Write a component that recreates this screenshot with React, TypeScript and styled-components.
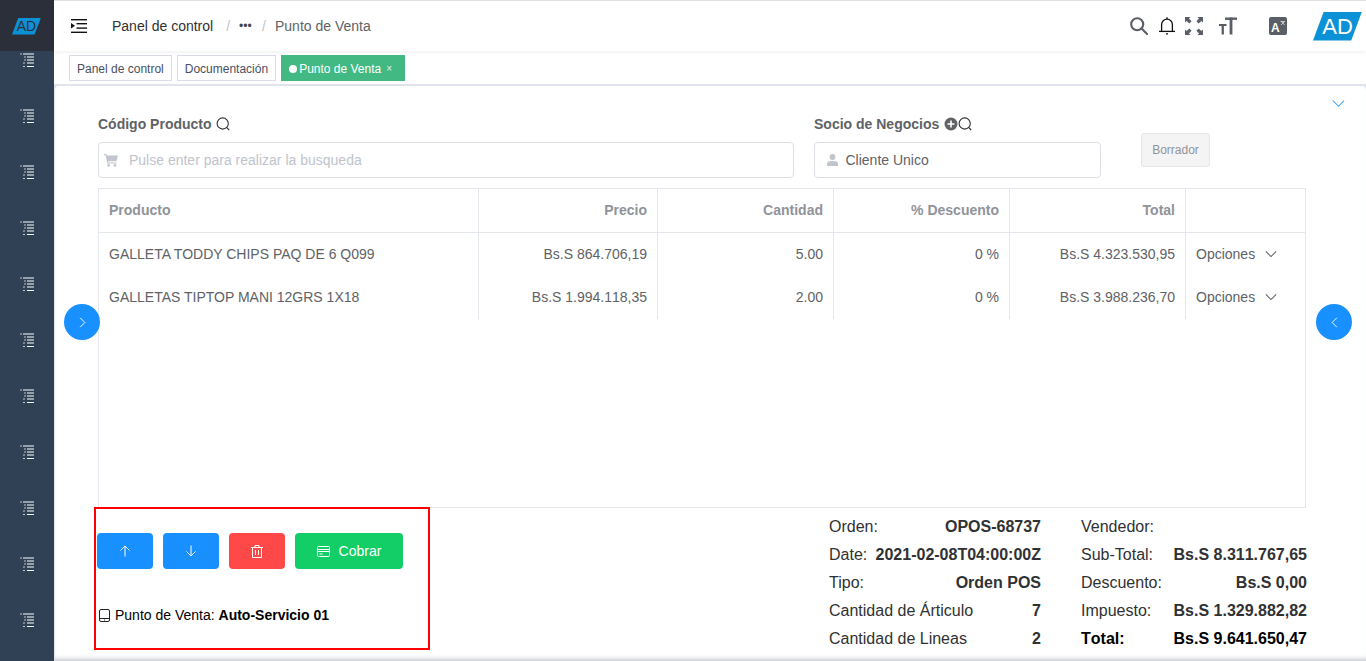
import React from 'react';
import styled, { createGlobalStyle } from 'styled-components';

const GlobalStyle = createGlobalStyle`
  html, body {
    margin: 0;
    height: 661px;
    overflow: hidden;
    background: #fff;
    font-family: "Liberation Sans", Arial, sans-serif;
    font-size: 14px;
    color: #606266;
  }
  * { box-sizing: border-box; }
`;

const rows = [
  { name: 'GALLETA TODDY CHIPS PAQ DE 6 Q099', price: 'Bs.S 864.706,19', qty: '5.00', disc: '0 %', total: 'Bs.S 4.323.530,95' },
  { name: 'GALLETAS TIPTOP MANI 12GRS 1X18', price: 'Bs.S 1.994.118,35', qty: '2.00', disc: '0 %', total: 'Bs.S 3.988.236,70' },
];

const leftSummary = [
  ['Orden:', 'OPOS-68737'],
  ['Date:', '2021-02-08T04:00:00Z'],
  ['Tipo:', 'Orden POS'],
  ['Cantidad de Árticulo', '7'],
  ['Cantidad de Lineas', '2'],
];

const rightSummary = [
  ['Vendedor:', ''],
  ['Sub-Total:', 'Bs.S 8.311.767,65'],
  ['Descuento:', 'Bs.S 0,00'],
  ['Impuesto:', 'Bs.S 1.329.882,82'],
];

const MenuIcon = () => (
  <svg width="14" height="15" viewBox="0 0 14 15" fill="#fff">
    <rect x="0" y="0.5" width="2" height="1" opacity="0.7" />
    <rect x="3" y="0.5" width="11" height="1" />
    <rect x="4" y="3.5" width="2" height="1" opacity="0.7" />
    <rect x="7" y="3.5" width="7" height="1" />
    <rect x="4" y="6.5" width="2" height="1" opacity="0.7" />
    <rect x="7" y="6.5" width="7" height="1" />
    <rect x="3" y="9.5" width="2" height="1" opacity="0.7" />
    <rect x="7" y="9.5" width="7" height="1" />
    <rect x="3" y="13" width="2" height="1" opacity="0.7" />
    <rect x="7" y="13" width="7" height="1" />
  </svg>
);

const Hamburger = () => (
  <svg width="16" height="14" viewBox="0 0 16 14" fill="#111">
    <rect x="0" y="0" width="16" height="1.4" />
    <rect x="5.5" y="4" width="10.5" height="1.4" />
    <rect x="5.5" y="8.4" width="10.5" height="1.4" />
    <rect x="0" y="12.6" width="16" height="1.4" />
    <path d="M0 4l4 2.8L0 9.6z" />
  </svg>
);

const SearchRing = () => (
  <svg width="14" height="14" viewBox="0 0 14 14" fill="none" stroke="#303133" strokeWidth="1.1">
    <circle cx="6.7" cy="6.500" r="5.600" />
    <path d="M10.800 10.600l2.400 2.400" />
  </svg>
);

const BigSearch = () => (
  <svg width="18" height="18" viewBox="0 0 18 18" fill="none" stroke="#5a5e66" strokeWidth="2.1">
    <circle cx="7.2" cy="7.2" r="6" />
    <path d="M11.6 11.6l5.4 5.4" strokeLinecap="round" />
  </svg>
);

const Bell = () => (
  <svg width="16" height="18" viewBox="0 0 16 18" fill="none" stroke="#111" strokeWidth="1.3">
    <path d="M2.6 14V7.500a5.400 5.400 0 0 1 10.800 0V14" />
    <path d="M8 .3v1.800" />
    <path d="M0 14.400h16" />
    <path d="M7 16.800h2" />
  </svg>
);

const Fullscreen = () => (
  <svg width="18" height="18" viewBox="0 0 18 18" fill="#5a5e66">
    <path d="M0 0h5.500L3.900 1.600 6.600 4.300 4.300 6.600 1.600 3.900 0 5.500z" />
    <path d="M18 0v5.500l-1.600-1.600-2.700 2.700-2.300-2.300 2.700-2.700L12.500 0z" />
    <path d="M0 18v-5.500l1.600 1.600 2.700-2.700 2.300 2.300-2.700 2.700L5.500 18z" />
    <path d="M18 18h-5.500l1.600-1.600-2.700-2.700 2.300-2.300 2.700 2.700 1.600-1.600z" />
  </svg>
);

const TextSize = () => (
  <svg width="18" height="18" viewBox="0 0 18 18" fill="#5a5e66">
    <rect x="6" y="0.5" width="12" height="2.4" />
    <rect x="10.6" y="0.5" width="2.8" height="17" />
    <rect x="0" y="7" width="7.5" height="2" />
    <rect x="2.6" y="7" width="2.3" height="10.5" />
  </svg>
);

const Translate = () => (
  <svg width="18" height="18" viewBox="0 0 18 18">
    <rect width="18" height="18" rx="2" fill="#5a5e66" />
    <text x="2" y="15" fontFamily="Liberation Sans" fontSize="12" fontWeight="700" fill="#fff">A</text>
    <path d="M11.5 4.5h4.5M12 8l3.5-3.5M12.5 4.5L15.5 8" stroke="#d5d6d9" strokeWidth="0.9" fill="none" />
  </svg>
);

const Cart = () => (
  <svg width="14" height="14" viewBox="0 0 14 14" fill="#c0c4cc">
    <path d="M0 1h2.4l.5 1.6H14l-1.6 5.6H4.2l.3 1.2h8v1.2H3.4L1.6 2.2H0z" />
    <circle cx="4.6" cy="12.4" r="1.3" />
    <circle cx="11" cy="12.4" r="1.3" />
  </svg>
);

const Person = () => (
  <svg width="11" height="12" viewBox="0 0 11 12" fill="#c0c4cc">
    <circle cx="5.5" cy="3" r="2.9" />
    <path d="M0 12V9.6C0 7.8 2 7 5.5 7S11 7.8 11 9.6V12z" />
  </svg>
);

const PlusCircle = () => (
  <svg width="14" height="14" viewBox="0 0 14 14">
    <circle cx="7" cy="7" r="6.5" fill="#606266" />
    <path d="M7 3.5v7M3.5 7h7" stroke="#fff" strokeWidth="1.6" />
  </svg>
);

const Chevron = ({ dir, color, size }: { dir: 'up' | 'down' | 'left' | 'right'; color: string; size: number }) => {
  const d = { down: 'M1 4l6 6 6-6', up: 'M1 10l6-6 6 6', left: 'M10 1L4 7l6 6', right: 'M4 1l6 6-6 6' }[dir];
  return (
    <svg width={size} height={size} viewBox="0 0 14 14" fill="none" stroke={color} strokeWidth="1.2">
      <path d={d} />
    </svg>
  );
};

const ArrowUp = () => (
  <svg width="12" height="12" viewBox="0 0 12 12" fill="none" stroke="#fff" strokeWidth="1">
    <path d="M6 11.500V1M1.500 5.500L6 1l4.500 4.500" />
  </svg>
);

const ArrowDown = () => (
  <svg width="12" height="12" viewBox="0 0 12 12" fill="none" stroke="#fff" strokeWidth="1">
    <path d="M6 .5V11M1.500 6.500L6 11l4.500-4.500" />
  </svg>
);

const Trash = () => (
  <svg width="12" height="13" viewBox="0 0 12 13" fill="none" stroke="#fff" strokeWidth="1">
    <path d="M0 2.500h12M4 2.500V.5h4v2M1.500 2.500v10h9v-10M4.500 5v5M7.500 5v5" />
  </svg>
);

const BankCard = () => (
  <svg width="13" height="11" viewBox="0 0 13 11" fill="none" stroke="#fff" strokeWidth="1">
    <rect x="0.5" y="0.500" width="12" height="10" rx="1" />
    <path d="M.5 3.500h12M.5 5.500h12M2.500 8h3" />
  </svg>
);

const Tablet = () => (
  <svg width="11" height="13" viewBox="0 0 11 13" fill="none" stroke="#222" strokeWidth="1">
    <rect x="0.5" y="0.5" width="10" height="12" rx="1.500" />
    <path d="M.5 9.500h10M5 11h1" />
  </svg>
);

export default function App() {
  return (
    <>
      <GlobalStyle />
      <Layout>
        <Sidebar>
          <SideLogo>
            <Parallelogram $small>AD</Parallelogram>
          </SideLogo>
          <SideMenu>
            {Array.from({ length: 11 }, (_, i) => (
              <SideItem key={i}>
                <MenuIcon />
              </SideItem>
            ))}
          </SideMenu>
        </Sidebar>
        <Main>
          <Navbar>
            <HamburgerSlot>
              <Hamburger />
            </HamburgerSlot>
            <Crumb $strong>Panel de control</Crumb>
            <CrumbSep>/</CrumbSep>
            <CrumbDots>•••</CrumbDots>
            <CrumbSep>/</CrumbSep>
            <Crumb>Punto de Venta</Crumb>
            <NavRight>
              <NavIcon $gap={11}>
                <BigSearch />
              </NavIcon>
              <NavIcon $gap={10}>
                <Bell />
              </NavIcon>
              <NavIcon $gap={16}>
                <Fullscreen />
              </NavIcon>
              <NavIcon $gap={32}>
                <TextSize />
              </NavIcon>
              <NavIcon $gap={26}>
                <Translate />
              </NavIcon>
              <Parallelogram>AD</Parallelogram>
            </NavRight>
          </Navbar>
          <TagsBar>
            <Tag>Panel de control</Tag>
            <Tag>Documentación</Tag>
            <Tag $active>
              <TagDot />
              Punto de Venta
              <TagClose>×</TagClose>
            </Tag>
          </TagsBar>
          <Card>
            <CollapseRow>
              <Chevron dir="down" color="#3ea6f7" size={13} />
            </CollapseRow>
            <FormRow>
              <Field $width={696}>
                <FieldLabel>
                  Código Producto <SearchRing />
                </FieldLabel>
                <InputBox>
                  <Cart />
                  <Placeholder>Pulse enter para realizar la busqueda</Placeholder>
                </InputBox>
              </Field>
              <Field $width={287}>
                <FieldLabel>
                  Socio de Negocios <PlusCircle />
                  <SearchRing />
                </FieldLabel>
                <InputBox $tight>
                  <Person />
                  <span>Cliente Unico</span>
                </InputBox>
              </Field>
              <DraftButton>Borrador</DraftButton>
            </FormRow>
            <TableWrap>
              <Table>
                <colgroup>
                  <col style={{ width: 380 }} />
                  <col style={{ width: 179 }} />
                  <col style={{ width: 176 }} />
                  <col style={{ width: 176 }} />
                  <col style={{ width: 176 }} />
                  <col />
                </colgroup>
                <thead>
                  <tr>
                    <Th $left>Producto</Th>
                    <Th>Precio</Th>
                    <Th>Cantidad</Th>
                    <Th>% Descuento</Th>
                    <Th>Total</Th>
                    <Th />
                  </tr>
                </thead>
                <tbody>
                  {rows.map((r) => (
                    <tr key={r.name}>
                      <Td $left>{r.name}</Td>
                      <Td>{r.price}</Td>
                      <Td>{r.qty}</Td>
                      <Td>{r.disc}</Td>
                      <Td>{r.total}</Td>
                      <Td $left>
                        <Options>
                          Opciones
                          <Chevron dir="down" color="#606266" size={12} />
                        </Options>
                      </Td>
                    </tr>
                  ))}
                </tbody>
              </Table>
            </TableWrap>
            <BottomRow>
              <ActionsPanel>
                <Buttons>
                  <ActionButton $color="#1890ff">
                    <ArrowUp />
                  </ActionButton>
                  <ActionButton $color="#1890ff">
                    <ArrowDown />
                  </ActionButton>
                  <ActionButton $color="#ff4949">
                    <Trash />
                  </ActionButton>
                  <PayButton>
                    <BankCard />
                    Cobrar
                  </PayButton>
                </Buttons>
                <PosLine>
                  <Tablet />
                  <span>
                    Punto de Venta: <b>Auto-Servicio 01</b>
                  </span>
                </PosLine>
              </ActionsPanel>
              <Summary>
                <SummaryCol $width={212}>
                  {leftSummary.map(([label, value]) => (
                    <SummaryRow key={label}>
                      <span>{label}</span>
                      <b>{value}</b>
                    </SummaryRow>
                  ))}
                </SummaryCol>
                <SummaryCol $width={226}>
                  {rightSummary.map(([label, value]) => (
                    <SummaryRow key={label}>
                      <span>{label}</span>
                      <b>{value}</b>
                    </SummaryRow>
                  ))}
                  <SummaryRow $total>
                    <b>Total:</b>
                    <b>Bs.S 9.641.650,47</b>
                  </SummaryRow>
                </SummaryCol>
              </Summary>
            </BottomRow>
            <SideRound $side="left">
              <Chevron dir="right" color="#fff" size={11} />
            </SideRound>
            <SideRound $side="right">
              <Chevron dir="left" color="#fff" size={11} />
            </SideRound>
          </Card>
        </Main>
      </Layout>
    </>
  );
}

const Layout = styled.div`
  display: flex;
  width: 1366px;
  height: 661px;
  overflow: hidden;
`;

const Sidebar = styled.aside`
  width: 54px;
  flex: none;
  background: #304156;
  display: flex;
  flex-direction: column;
`;

const SideLogo = styled.div`
  height: 51px;
  flex: none;
  background: #2b2f3a;
  display: flex;
  align-items: center;
  justify-content: flex-start;
  padding: 1px 0 0 12px;
`;

const SideMenu = styled.nav`
  display: flex;
  flex-direction: column;
  align-items: center;
  padding-top: 2px;
`;

const SideItem = styled.div`
  height: 56px;
  flex: none;
`;

const Parallelogram = styled.div<{ $small?: boolean }>`
  width: ${(p) => (p.$small ? 29 : 49)}px;
  height: ${(p) => (p.$small ? 17 : 29)}px;
  background: #0a91d6;
  clip-path: polygon(22% 0, 100% 0, 78% 100%, 0 100%);
  color: ${(p) => (p.$small ? '#2b2f3a' : '#fff')};
  font-size: ${(p) => (p.$small ? 14 : 22)}px;
  line-height: ${(p) => (p.$small ? 17 : 29)}px;
  text-align: center;
`;

const Main = styled.main`
  flex: 1;
  min-width: 0;
  display: flex;
  flex-direction: column;
  background: #e1e4ec;
`;

const Navbar = styled.header`
  height: 51px;
  flex: none;
  background: #fff;
  border-top: 1px solid #dfe1e8;
  display: flex;
  align-items: center;
  padding: 0 4px 0 17px;
  box-shadow: 0 1px 4px rgba(0, 21, 41, 0.08);
  position: relative;
`;

const HamburgerSlot = styled.div`
  display: flex;
  margin-right: 25px;
`;

const Crumb = styled.span<{ $strong?: boolean }>`
  color: ${(p) => (p.$strong ? '#303133' : '#606266')};
`;

const CrumbSep = styled.span`
  color: #c0c4cc;
  margin: 0 9px 0 13px;
  font-size: 14px;
`;

const CrumbDots = styled.span`
  color: #444;
  font-size: 12px;
  width: 10px;
  white-space: nowrap;
`;

const NavRight = styled.div`
  margin-left: auto;
  display: flex;
  align-items: center;
`;

const NavIcon = styled.div<{ $gap: number }>`
  display: flex;
  margin-right: ${(p) => p.$gap}px;
`;

const TagsBar = styled.div`
  height: 33px;
  flex: none;
  background: #fff;
  display: flex;
  gap: 5px;
  padding: 4px 0 0 15px;
`;

const Tag = styled.div<{ $active?: boolean }>`
  height: 26px;
  padding: 1px 7px 0;
  font-size: 12px;
  border: 1px solid ${(p) => (p.$active ? '#42b983' : '#d8dce5')};
  background: ${(p) => (p.$active ? '#42b983' : '#fff')};
  color: ${(p) => (p.$active ? '#fff' : '#495060')};
  display: flex;
  align-items: center;
`;

const TagDot = styled.i`
  width: 8px;
  height: 8px;
  border-radius: 50%;
  background: #fff;
  margin-right: 2px;
`;

const TagClose = styled.span`
  font-size: 10px;
  margin: 0 5px 0 5px;
  opacity: 0.85;
`;

const Card = styled.section`
  position: relative;
  height: 575px;
  margin: 2px 0 0 1px;
  flex: none;
  background: #fff;
  border-radius: 4px 4px 0 0;
  padding: 0 60px 0 43px;
  box-shadow: inset 0 -5px 4px -3px rgba(60, 70, 100, 0.3);
`;

const CollapseRow = styled.div`
  height: 29px;
  display: flex;
  justify-content: flex-end;
  align-items: flex-start;
  padding-top: 11px;
  margin-right: -39px;
`;

const FormRow = styled.div`
  display: flex;
  gap: 20px;
  align-items: flex-start;
`;

const Field = styled.div<{ $width: number }>`
  width: ${(p) => p.$width}px;
`;

const FieldLabel = styled.label`
  height: 18px;
  display: flex;
  align-items: center;
  gap: 1px;
  font-weight: 700;
  margin-bottom: 9px;
  white-space: pre;
  svg + svg {
    margin-left: -1px;
  }
`;

const InputBox = styled.div<{ $tight?: boolean }>`
  height: 36px;
  border: 1px solid #dcdfe6;
  border-radius: 4px;
  display: flex;
  align-items: center;
  padding-left: ${(p) => (p.$tight ? 12 : 5)}px;
  gap: ${(p) => (p.$tight ? 7.5 : 11)}px;
`;

const Placeholder = styled.span`
  color: #c0c4cc;
`;

const DraftButton = styled.button`
  margin: 18px 0 0 20px;
  width: 69px;
  height: 34px;
  padding: 0;
  background: #f4f4f5;
  border: 1px solid #e4e6ea;
  border-radius: 3px;
  color: #909399;
  font-family: inherit;
  font-size: 12px;
`;

const TableWrap = styled.div`
  margin-top: 10px;
  width: 1208px;
  height: 320px;
  border: 1px solid #e4e7ed;
`;

const Table = styled.table`
  width: 100%;
  table-layout: fixed;
  border-collapse: separate;
  border-spacing: 0;
`;

const Th = styled.th<{ $left?: boolean }>`
  height: 44px;
  padding: 0 10px 2px;
  font-weight: 700;
  color: #909399;
  text-align: ${(p) => (p.$left ? 'left' : 'right')};
  border-right: 1px solid #e4e7ed;
  border-bottom: 1px solid #e4e7ed;
  &:last-child {
    border-right: none;
  }
`;

const Td = styled.td<{ $left?: boolean }>`
  height: 43px;
  padding: 0 10px 2px;
  text-align: ${(p) => (p.$left ? 'left' : 'right')};
  font-kerning: ${(p) => (p.$left ? 'auto' : 'none')};
  border-right: 1px solid #e4e7ed;
  white-space: nowrap;
  &:last-child {
    border-right: none;
  }
`;

const Options = styled.span`
  display: inline-flex;
  align-items: center;
  gap: 10px;
`;

const BottomRow = styled.div`
  display: flex;
  justify-content: space-between;
  margin: -1px -1px 0 -4px;
`;

const ActionsPanel = styled.div`
  width: 336px;
  height: 143px;
  border: 2px solid #f00;
  padding: 24px 0 0 1px;
`;

const Buttons = styled.div`
  display: flex;
  gap: 10px;
`;

const ActionButton = styled.button<{ $color: string }>`
  width: 56px;
  height: 36px;
  padding: 0;
  border: none;
  border-radius: 4px;
  background: ${(p) => p.$color};
  display: flex;
  align-items: center;
  justify-content: center;
`;

const PayButton = styled.button`
  width: 108px;
  height: 36px;
  padding: 0;
  border: none;
  border-radius: 4px;
  background: #13ce66;
  color: #fff;
  font-family: inherit;
  font-size: 14px;
  display: flex;
  align-items: center;
  justify-content: center;
  gap: 9px;
`;

const PosLine = styled.div`
  margin-top: 38px;
  padding-left: 2px;
  display: flex;
  align-items: center;
  gap: 5px;
  color: #000;
`;

const Summary = styled.div`
  display: flex;
  gap: 40px;
  padding-top: 6px;
`;

const SummaryCol = styled.div<{ $width: number }>`
  width: ${(p) => p.$width}px;
`;

const SummaryRow = styled.div<{ $total?: boolean }>`
  height: 28px;
  display: flex;
  align-items: center;
  justify-content: space-between;
  font-size: 16px;
  color: ${(p) => (p.$total ? '#000' : '#303133')};
  white-space: nowrap;
  b {
    font-kerning: none;
  }
`;

const SideRound = styled.button<{ $side: 'left' | 'right' }>`
  position: absolute;
  top: 218px;
  ${(p) => (p.$side === 'left' ? 'left: 9px;' : 'right: 14px;')}
  width: 36px;
  height: 36px;
  padding: 0;
  border: none;
  border-radius: 50%;
  background: #1890ff;
  display: flex;
  align-items: center;
  justify-content: center;
`;
